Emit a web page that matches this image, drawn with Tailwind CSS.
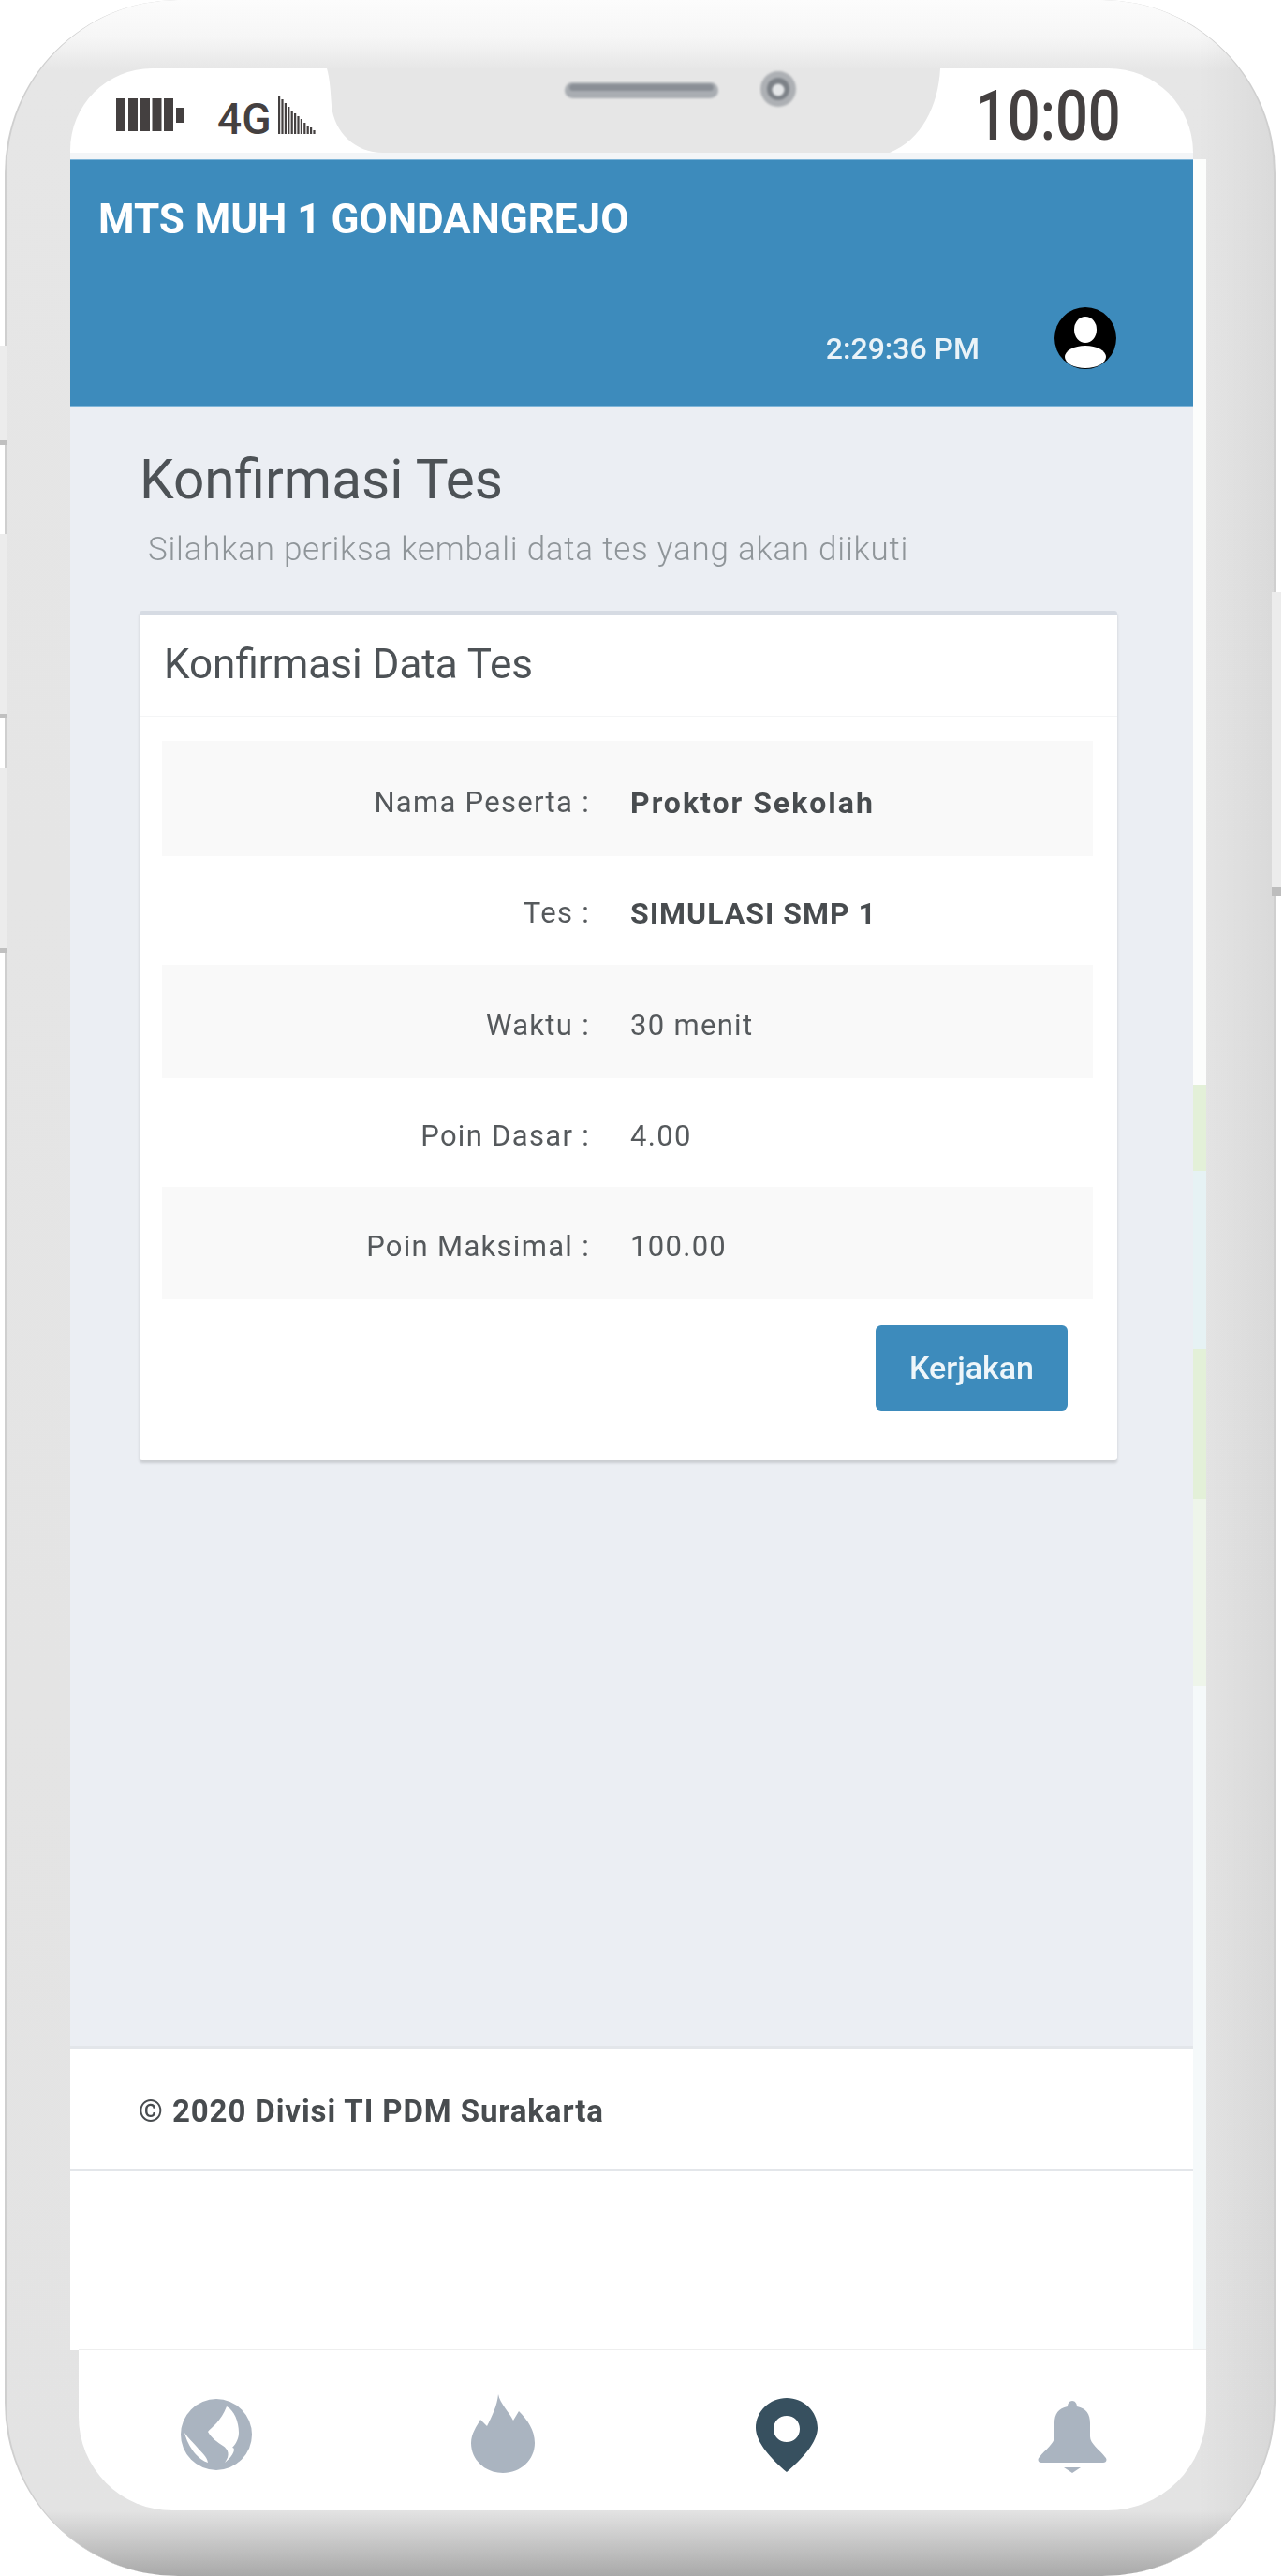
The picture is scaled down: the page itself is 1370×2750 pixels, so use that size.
<!DOCTYPE html>
<html lang="en">
<head>
  <meta charset="UTF-8" />
  <title>Konfirmasi Tes</title>
  <script src="https://cdn.jsdelivr.net/npm/@tailwindcss/browser@4"></script>
</head>
<body class="bg-white font-['Roboto',sans-serif]">
  <div class="relative w-[1370px] h-[2750px] overflow-hidden bg-white">

    <!-- Side buttons -->
    <div class="absolute left-0 top-[369px] w-[8px] h-[106px] bg-[#ececec] border-b-[5px] border-[#c0c0c0]"></div>
    <div class="absolute left-0 top-[570px] w-[8px] h-[197px] bg-[#ececec] border-b-[5px] border-[#c0c0c0]"></div>
    <div class="absolute left-0 top-[820px] w-[8px] h-[197px] bg-[#ececec] border-b-[5px] border-[#c0c0c0]"></div>
    <div class="absolute left-[1358px] top-[632px] w-[10px] h-[325px] bg-[#ececec] border-b-[10px] border-[#bdbdbd]"></div>

    <!-- Phone body -->
    <div class="w-[1357px] h-[2750px] ml-[5px] rounded-[185px] border-x-2 border-[#cfcfcf] bg-[linear-gradient(90deg,transparent_94%,rgba(0,0,0,0.05)_100%),linear-gradient(180deg,#fcfcfc_0px,#f6f6f6_40px,#e6e6e6_75px,#e3e3e3_2680px,#a9a9a9_2750px)] pt-[73px] pl-[68px] overflow-hidden">

      <!-- Status bar -->
      <div class="relative w-[1199px] h-[90px] bg-white rounded-tl-[92px] rounded-tr-[95px]">
        <svg class="absolute left-[274px] top-0" width="657" height="90" viewBox="0 0 657 90">
          <path d="M0 0H655C653 40 635 76 601 90H60C30 90 8 68 5 40C4 24 3 10 0 0Z" fill="#e6e6e6" />
        </svg>
        <svg class="absolute left-[527px] top-[13px] blur-[1px]" width="166" height="22" viewBox="0 0 166 22">
          <rect x="1" y="2" width="164" height="17" rx="8.5" fill="#a9adb2" />
          <rect x="6" y="4" width="154" height="7" rx="3.5" fill="#8a8f96" />
        </svg>
        <svg class="absolute left-[734px] top-0 blur-[1px]" width="44" height="44" viewBox="0 0 44 44">
          <circle cx="22" cy="22" r="19" fill="#adb0b4" />
          <circle cx="22" cy="22" r="12" fill="#7d8288" />
          <circle cx="22" cy="23" r="6.5" fill="#e4e6e8" />
        </svg>

        <div class="absolute inset-x-0 top-0 flex items-start justify-between">
          <div class="flex items-start pl-[49px] pt-[32px]">
            <svg width="73" height="35" viewBox="0 0 73 35" fill="#444040">
              <rect x="0" y="0" width="10" height="35" /><rect x="13" y="0" width="10" height="35" /><rect x="26" y="0" width="10" height="35" /><rect x="38.5" y="0" width="10" height="35" /><rect x="51" y="0" width="10" height="35" /><rect x="64" y="10" width="9" height="16" />
            </svg>
            <span class="ml-[35px] -mt-[1px] w-[65px] text-[46px] leading-[46px] font-medium text-[#444040]">4G</span>
            <svg class="-mt-[3px]" width="42" height="42" viewBox="0 0 42 42" fill="#444040">
              <rect x="0" y="0" width="2.2" height="41" /><rect x="3.4" y="4" width="2.2" height="37" /><rect x="6.8" y="8" width="2.2" height="33" /><rect x="10.2" y="12" width="2.2" height="29" /><rect x="13.6" y="16" width="2.2" height="25" /><rect x="17" y="19" width="2.2" height="22" /><rect x="20.4" y="22" width="2.2" height="19" /><rect x="23.8" y="25" width="2.2" height="16" /><rect x="27.2" y="29" width="2.2" height="12" /><rect x="30.6" y="32" width="2.2" height="9" /><rect x="34" y="34" width="2.2" height="7" /><rect x="37.4" y="37" width="2.2" height="4" />
            </svg>
          </div>
          <span class="mr-[77px] mt-[11px] text-[74px] leading-[80px] font-medium text-[#444040] scale-x-[0.83] origin-right">10:00</span>
        </div>
      </div>
      <div class="w-[1199px] h-[7px] bg-[#f3f5f7]"></div>

      <div class="flex">
        <!-- Screen -->
        <div class="w-[1199px]">
          <header class="h-[264px] bg-[#3d8bbc] border-y border-[#7fb5d8]">
            <div class="pl-[30px] pt-[39px] text-[44px] leading-[48px] font-bold text-white whitespace-nowrap blur-[0.6px]">MTS MUH 1 GONDANGREJO</div>
            <div class="flex items-start justify-end mt-[70px] pr-[82px]">
              <span class="mt-[27px] mr-[80px] text-[32px] leading-[34px] font-medium text-[#eaf3f8] blur-[0.5px]">2:29:36 PM</span>
              <svg class="blur-[0.5px]" width="66" height="66" viewBox="0 0 66 66">
                <circle cx="33" cy="33" r="33" fill="#000" />
                <ellipse cx="33" cy="24" rx="12" ry="14" fill="#fff" />
                <ellipse cx="33" cy="53" rx="22" ry="12" fill="#fff" />
              </svg>
            </div>
          </header>

          <main class="h-[1750px] bg-[#ebeef3] pl-[74px]">
            <h1 class="pt-[43px] text-[58.5px] leading-[70px] text-[#4d5256] blur-[0.4px]">Konfirmasi Tes</h1>
            <p class="mt-[18px] pl-[9px] text-[35px] leading-[44px] tracking-[0.75px] font-light text-[#8f9599] blur-[0.4px]">Silahkan periksa kembali data tes yang akan diikuti</p>

            <section class="mt-[43px] w-[1044px] h-[907px] bg-white border-t-[5px] border-[#d6dbe3] rounded-[3px] shadow-[0_3px_3px_rgba(0,0,0,0.14)]">
              <div class="h-[108px] border-b border-[#f4f5f6] pl-[26px] pt-[26px] text-[44px] leading-[52px] text-[#4d5256] blur-[0.4px]">Konfirmasi Data Tes</div>

              <div class="ml-[24px] mt-[26px] w-[994px] text-[31px] leading-[40px] tracking-[1.3px] text-[#55595c]">
                <div class="h-[123px] pt-[8px] flex items-center bg-[#f9f9f9]">
                  <span class="w-[457px] text-right blur-[0.4px]">Nama Peserta :</span>
                  <span class="ml-[43px] text-[32px] font-bold tracking-[2px] text-[#484c4f] blur-[0.4px]">Proktor Sekolah</span>
                </div>
                <div class="h-[116px] pt-[5px] flex items-center">
                  <span class="w-[457px] text-right blur-[0.4px]">Tes :</span>
                  <span class="ml-[43px] text-[32px] font-bold tracking-[1px] text-[#484c4f] blur-[0.4px]">SIMULASI SMP 1</span>
                </div>
                <div class="h-[121px] pt-[8px] flex items-center bg-[#f9f9f9]">
                  <span class="w-[457px] text-right blur-[0.4px]">Waktu :</span>
                  <span class="ml-[43px] blur-[0.4px]">30 menit</span>
                </div>
                <div class="h-[116px] pt-[8px] flex items-center">
                  <span class="w-[457px] text-right blur-[0.4px]">Poin Dasar :</span>
                  <span class="ml-[43px] blur-[0.4px]">4.00</span>
                </div>
                <div class="h-[120px] pt-[8px] flex items-center bg-[#f9f9f9]">
                  <span class="w-[457px] text-right blur-[0.4px]">Poin Maksimal :</span>
                  <span class="ml-[43px] blur-[0.4px]">100.00</span>
                </div>
              </div>

              <div class="flex justify-end pr-[53px] mt-[28px]">
                <button class="w-[205px] h-[91px] rounded-[6px] bg-[#3d8bbc] text-[34px] font-medium text-[#eef6fa]"><span class="blur-[0.4px]">Kerjakan</span></button>
              </div>
            </section>
          </main>

          <footer class="h-[134px] bg-white border-y-[3px] border-[#e3e6ea] pl-[73px] pt-[49px]">
            <span class="text-[33px] leading-[36px] tracking-[0.9px] font-bold text-[#484c4f] blur-[0.4px]">© 2020 Divisi TI PDM Surakarta</span>
          </footer>
          <div class="h-[191px] bg-white"></div>
        </div>

        <!-- Map showing past the edge of the screen -->
        <div class="w-[14px] h-[2339px] bg-[#fcfdfc] flex flex-col">
          <div class="h-[988px]"></div>
          <div class="h-[92px] bg-[#e3f0d8]"></div>
          <div class="h-[190px] bg-[#e6f2f4]"></div>
          <div class="h-[160px] bg-[#e3f0d8]"></div>
          <div class="h-[200px] bg-[#eef5ea]"></div>
          <div class="flex-1 bg-[#f5f9fa]"></div>
        </div>
      </div>

      <!-- Bottom navigation -->
      <nav class="relative -mt-[1px] ml-[9px] w-[1204px] h-[172px] bg-white rounded-bl-[100px] rounded-br-[105px] border-t border-[#eeeeee]">
        <div class="absolute left-[108px] top-[52px] blur-[0.7px]">
          <svg width="78" height="76" viewBox="0 0 78 76">
            <circle cx="39" cy="38" r="38" fill="#aab4c0" />
            <path d="M50 8C58 12 63 24 63 36C63 44 58 50 56 52C60 52 58 60 48 68C54 60 52 54 46 50C40 46 34 42 30 35C34 30 44 24 50 8Z" fill="#fff" />
            <path d="M5 36C9 42 14 46 18 51C23 57 29 61 30 68C20 65 9 52 5 36Z" fill="#fff" />
          </svg>
        </div>
        <div class="absolute left-[419px] top-[47px] blur-[0.7px]">
          <svg width="68" height="84" viewBox="0 0 68 84">
            <path d="M29 0C31 10 40 18 45 28L51 18C60 27 68 38 68 52C68 70 53 84 34 84C15 84 0 70 0 52C0 42 6 34 10 27L17 34C22 24 28 12 29 0Z" fill="#aab4c0" />
          </svg>
        </div>
        <div class="absolute left-[723px] top-[51px] blur-[0.7px]">
          <svg width="66" height="80" viewBox="0 0 66 80">
            <path fill-rule="evenodd" d="M33 0C51 0 66 14 66 32C66 47 49 66 33 79C17 66 0 47 0 32C0 14 15 0 33 0ZM33 19C25 19 19 25 19 33C19 41 25 47 33 47C41 47 47 41 47 33C47 25 41 19 33 19Z" fill="#37505f" />
          </svg>
        </div>
        <div class="absolute left-[1024px] top-[54px] blur-[0.7px]">
          <svg width="74" height="78" viewBox="0 0 74 78">
            <path d="M37 0C40 0 42 3 42 6C52 8 56 14 56 24V38C56 46 66 52 72 60C75 63 73 66 70 66H4C1 66 -1 63 2 60C8 52 18 46 18 38V24C18 14 22 8 32 6C32 3 34 0 37 0Z" fill="#aab4c0" />
            <path d="M28 71H46L37 77Z" fill="#aab4c0" />
          </svg>
        </div>
      </nav>
    </div>
  </div>
</body>
</html>
